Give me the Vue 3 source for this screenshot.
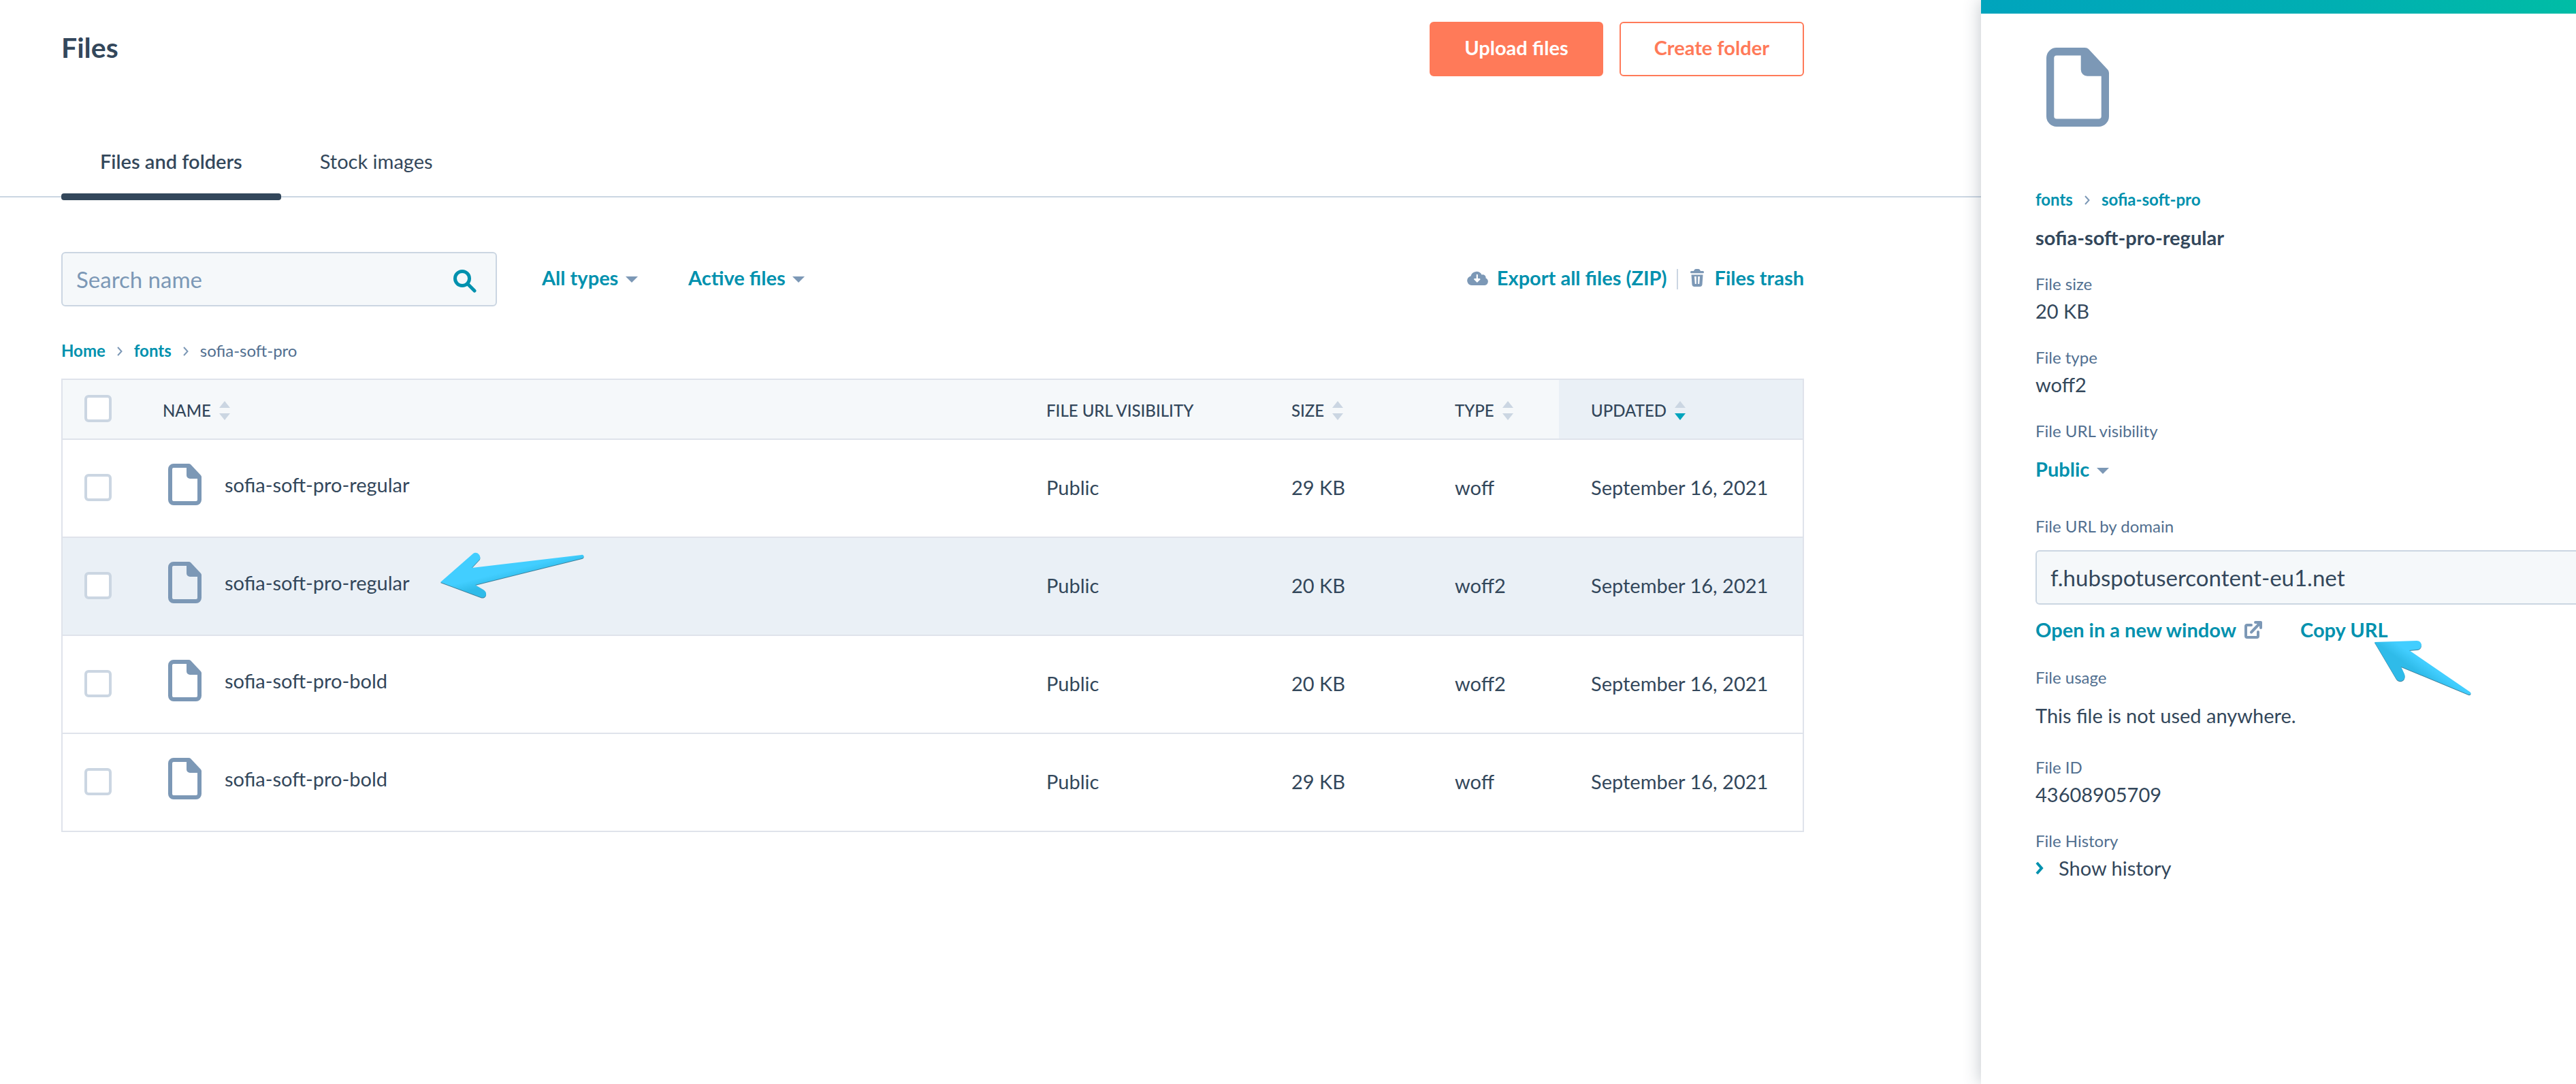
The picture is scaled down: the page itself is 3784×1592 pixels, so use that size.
<script setup>
import { ref } from 'vue'

const search = ref('')
const typeFilter = ref('All types')
const stateFilter = ref('Active files')
const visibility = ref('Public')
const domain = ref('f.hubspotusercontent-eu1.net')

const files = [
  { id: 1, name: 'sofia-soft-pro-regular', size: '29 KB', type: 'woff' },
  { id: 2, name: 'sofia-soft-pro-regular', size: '20 KB', type: 'woff2', active: true },
  { id: 3, name: 'sofia-soft-pro-bold', size: '20 KB', type: 'woff2' },
  { id: 4, name: 'sofia-soft-pro-bold', size: '29 KB', type: 'woff' },
]

const columns = [
  { key: 'name', label: 'NAME', sortable: true },
  { key: 'visibility', label: 'FILE URL VISIBILITY' },
  { key: 'size', label: 'SIZE', sortable: true },
  { key: 'type', label: 'TYPE', sortable: true },
  { key: 'updated', label: 'UPDATED', sortable: true, sorted: true },
]

const filePath =
  'M8 0H30Q32 0 33 1L48 17Q49 18 49 19.5V53A8 8 0 0 1 41 61H8A8 8 0 0 1 0 53V8A8 8 0 0 1 8 0ZM8 6A2 2 0 0 0 6 8V53A2 2 0 0 0 8 55H41A2 2 0 0 0 43 53V22H32A5 5 0 0 1 27 17V6Z'
</script>

<template>
  <div class="page">
    <main class="main">
      <header class="header">
        <h1>Files</h1>
        <div class="actions">
          <button class="btn btn-primary" type="button">Upload files</button>
          <button class="btn btn-outline" type="button">Create folder</button>
        </div>
      </header>

      <nav class="tabs">
        <a class="tab current" href="#files">Files and folders</a>
        <a class="tab" href="#stock">Stock images</a>
      </nav>

      <div class="content">
        <div class="toolbar">
          <div class="search">
            <input v-model="search" type="text" placeholder="Search name" aria-label="Search name" />
            <svg class="search-icon" viewBox="0 0 34 34" aria-hidden="true">
              <circle cx="13" cy="13" r="10.5" fill="none" stroke="currentColor" stroke-width="5" />
              <path d="M21 21L31 31" stroke="currentColor" stroke-width="5" stroke-linecap="round" />
            </svg>
          </div>
          <div class="filters">
            <label class="dropdown">
              <select v-model="typeFilter" aria-label="File type">
                <option>All types</option>
              </select>
              <svg class="caret" viewBox="0 0 18 9" aria-hidden="true"><path d="M0 0H18L9 9Z" /></svg>
            </label>
            <label class="dropdown">
              <select v-model="stateFilter" aria-label="File state">
                <option>Active files</option>
              </select>
              <svg class="caret" viewBox="0 0 18 9" aria-hidden="true"><path d="M0 0H18L9 9Z" /></svg>
            </label>
          </div>
          <div class="tools">
            <a class="link tool" href="#export">
              <svg class="cloud" viewBox="0 0 32 22" aria-hidden="true">
                <path fill-rule="evenodd" d="M7 22A7 7 0 0 1 1.5 11Q3 9 5.500 8.500A8.600 8.600 0 0 1 21.500 6.500A4.500 4.500 0 0 1 27.500 11.500A5.500 5.500 0 0 1 26 22ZM13.700 6.500V12H11Q9.500 12.500 10.500 13.800L14.800 18L19.200 13.800Q20 12.500 18.500 12H15.900V6.500Q14.800 5 13.700 6.500Z" />
              </svg>
              Export all files (ZIP)
            </a>
            <span class="divider"></span>
            <a class="link tool" href="#trash">
              <svg class="trash" viewBox="0 0 20 26" aria-hidden="true">
                <path fill-rule="evenodd" d="M1.500 3H5Q6 0 8 0H12Q14 0 15 3H18.500Q20 3.300 20 4.700Q20 6.300 18.500 6.300H1.500Q0 6.300 0 4.700Q0 3.300 1.500 3ZM1.500 8.500H18.500L17.500 23Q17 26 14 26H6Q3 26 2.500 23ZM6 11L6.800 22H8.800V11ZM11.200 11V22H13.200L14 11Z" />
              </svg>
              Files trash
            </a>
          </div>
        </div>

        <nav class="crumbs" aria-label="Breadcrumb">
          <a class="link" href="#home">Home</a>
          <svg class="chevron" viewBox="0 0 8 14" aria-hidden="true"><path d="M1 1L6.500 7L1 13" /></svg>
          <a class="link" href="#fonts">fonts</a>
          <svg class="chevron" viewBox="0 0 8 14" aria-hidden="true"><path d="M1 1L6.500 7L1 13" /></svg>
          <span>sofia-soft-pro</span>
        </nav>

        <table>
          <colgroup>
            <col class="col-check" />
            <col />
            <col class="col-visibility" />
            <col class="col-size" />
            <col class="col-type" />
            <col class="col-updated" />
          </colgroup>
          <thead>
            <tr>
              <th class="check"><input type="checkbox" aria-label="Select all files" /></th>
              <th v-for="c in columns" :key="c.key" scope="col" :class="{ sorted: c.sorted }">
                <span class="th-label">
                  {{ c.label }}
                  <svg v-if="c.sortable" class="sorter" viewBox="0 0 16 28" aria-hidden="true">
                    <path d="M0 10H16L8 0Z" />
                    <path class="down" d="M0 18H16L8 28Z" />
                  </svg>
                </span>
              </th>
            </tr>
          </thead>
          <tbody>
            <tr v-for="f in files" :key="f.id" :class="{ active: f.active }">
              <td class="check"><input type="checkbox" :aria-label="'Select ' + f.name + ' ' + f.type" /></td>
              <td class="name">
                <a class="file" href="#file">
                  <svg class="file-icon" viewBox="0 0 49 61" aria-hidden="true"><path fill-rule="evenodd" :d="filePath" /></svg>
                  {{ f.name }}
                </a>
                <svg v-if="f.active" class="pointer pointer-row" viewBox="0 0 212 70" aria-hidden="true">
                  <defs>
                    <linearGradient id="pointer-row-fill" x1="95" y1="22" x2="101" y2="46" gradientUnits="userSpaceOnUse">
                      <stop offset="0.3" stop-color="#42ceff" />
                      <stop offset="0.9" stop-color="#2fbbe9" />
                    </linearGradient>
                  </defs>
                  <path fill="url(#pointer-row-fill)" d="M1 45L49 3C54 -1 61 5 59 11L47 24L208 5C212 4 213 9 209 10L52 49L64 56C72 61 67 70 60 67Z" />
                </svg>
              </td>
              <td>Public</td>
              <td>{{ f.size }}</td>
              <td>{{ f.type }}</td>
              <td>September 16, 2021</td>
            </tr>
          </tbody>
        </table>
      </div>
    </main>

    <aside class="panel">
      <div class="panel-bar"></div>
      <div class="panel-body">
        <svg class="preview" viewBox="0 0 49 61" preserveAspectRatio="none" aria-hidden="true"><path fill-rule="evenodd" :d="filePath" /></svg>

        <nav class="crumbs panel-crumbs" aria-label="File location">
          <a class="link" href="#fonts">fonts</a>
          <svg class="chevron" viewBox="0 0 8 14" aria-hidden="true"><path d="M1 1L6.500 7L1 13" /></svg>
          <a class="link" href="#sofia">sofia-soft-pro</a>
        </nav>
        <h2>sofia-soft-pro-regular</h2>

        <section class="field">
          <h3>File size</h3>
          <p>20 KB</p>
        </section>
        <section class="field">
          <h3>File type</h3>
          <p>woff2</p>
        </section>
        <section class="field roomy">
          <label for="visibility">File URL visibility</label>
          <div class="dropdown">
            <select id="visibility" v-model="visibility">
              <option>Public</option>
            </select>
            <svg class="caret" viewBox="0 0 18 9" aria-hidden="true"><path d="M0 0H18L9 9Z" /></svg>
          </div>
        </section>
        <section class="field domain">
          <label for="domain">File URL by domain</label>
          <select id="domain" v-model="domain" class="domain-select">
            <option>f.hubspotusercontent-eu1.net</option>
          </select>
          <div class="url-links">
            <a class="link open" href="#open">
              Open in a new window
              <svg class="external" viewBox="0 0 26 26" aria-hidden="true">
                <path d="M10 6H4Q2 6 2 8V22Q2 24 4 24H18Q20 24 20 22V16" />
                <path class="head" d="M16 2H24V10" />
                <path d="M22 4L10 16.500" />
              </svg>
            </a>
            <a class="link copy" href="#copy">
              Copy URL
              <svg class="pointer pointer-copy" viewBox="0 0 146 64" aria-hidden="true">
                <defs>
                  <linearGradient id="pointer-copy-fill" x1="64" y1="23" x2="50" y2="43" gradientUnits="userSpaceOnUse">
                    <stop offset="0.1" stop-color="#42ceff" />
                    <stop offset="0.8" stop-color="#2fbbe9" />
                  </linearGradient>
                </defs>
                <path fill="url(#pointer-copy-fill)" d="M1 3L63 1C72 1 72 13 64 14L52 15L141 76C144 78 142 81 139 80L40 39L45 50C48 59 38 64 33 57Z" />
              </svg>
            </a>
          </div>
        </section>
        <section class="field usage roomy">
          <h3>File usage</h3>
          <p>This file is not used anywhere.</p>
        </section>
        <section class="field file-id">
          <h3>File ID</h3>
          <p>43608905709</p>
        </section>
        <section class="field">
          <h3>File History</h3>
          <button class="history" type="button">
            <svg viewBox="0 0 12 20" aria-hidden="true"><path d="M2 2L9 10L2 18" /></svg>
            Show history
          </button>
        </section>
      </div>
    </aside>
  </div>
</template>

<style>
body {
  background: #fff;
}
</style>

<style scoped>
.page {
  display: flex;
  min-height: 100vh;
  overflow: hidden;
  color: #33475b;
  font-family: Lato, "Liberation Sans", sans-serif;
  font-size: 29px;
  line-height: 36px;
}

.page *,
.page *::before,
.page *::after {
  box-sizing: border-box;
}

h1, h2, h3, p {
  margin: 0;
}

input, select, button {
  font: inherit;
  color: inherit;
}

a {
  color: inherit;
  text-decoration: none;
}

.link {
  color: #0091ae;
  font-weight: 700;
}

.main {
  flex: 1;
  min-width: 0;
}

.header {
  display: flex;
  align-items: center;
  justify-content: space-between;
  padding: 32px 260px 0 90px;
}

h1 {
  padding-bottom: 4px;
  font-size: 41px;
  line-height: 48px;
  font-weight: 700;
}

.actions {
  display: flex;
  gap: 24px;
}

.btn {
  height: 80px;
  padding: 0 49px 4px;
  border: 2px solid #ff7a59;
  border-radius: 6px;
  font-size: 29px;
  font-weight: 700;
}

.btn-primary {
  background: #ff7a59;
  color: #fff;
}

.btn-outline {
  background: #fff;
  color: #ff7a59;
}

.tabs {
  display: flex;
  margin-top: 72px;
  padding-left: 90px;
  border-bottom: 2px solid #cbd6e2;
}

.tab {
  position: relative;
  height: 104px;
  padding: 0 57px;
  line-height: 106px;
}

.tab.current {
  font-weight: 600;
}

.tab.current::after {
  content: "";
  position: absolute;
  left: 0;
  right: 0;
  bottom: -6px;
  height: 10px;
  border-radius: 4px;
  background: #33475b;
}

.content {
  padding: 80px 260px 0 90px;
}

.toolbar {
  display: flex;
  align-items: center;
}

.search {
  position: relative;
  width: 640px;
}

.search input {
  display: block;
  width: 100%;
  height: 80px;
  padding: 0 80px 0 20px;
  border: 2px solid #cbd6e2;
  border-radius: 6px;
  background: #f5f8fa;
  font-size: 33px;
}

.search input::placeholder {
  color: #7c98b6;
  opacity: 1;
}

.search-icon {
  position: absolute;
  top: 26px;
  right: 30px;
  width: 34px;
  height: 34px;
  color: #0091ae;
}

.filters {
  display: flex;
  gap: 74px;
  margin-left: 66px;
  padding-bottom: 4px;
}

.dropdown {
  display: inline-flex;
  align-items: center;
  gap: 10px;
  color: #0091ae;
}

.dropdown select {
  appearance: none;
  padding: 0;
  border: 0;
  background: none;
  font-weight: 700;
  line-height: 36px;
}

.caret {
  width: 18px;
  height: 9px;
  margin-top: 4px;
  fill: #7c98b6;
}

.tools {
  display: flex;
  align-items: center;
  gap: 14px;
  margin-left: auto;
  padding-bottom: 4px;
}

.tool {
  display: flex;
  align-items: center;
  gap: 12px;
}

.tool svg {
  fill: #7c98b6;
}

.cloud {
  width: 32px;
  height: 22px;
}

.trash {
  width: 20px;
  height: 26px;
  margin: 0 4px;
}

.divider {
  width: 2px;
  height: 30px;
  margin-top: 4px;
  background: #cbd6e2;
}

.crumbs {
  display: flex;
  align-items: center;
  gap: 17px;
  margin: 49px 0 25px;
  color: #516f90;
  font-size: 24px;
  line-height: 32px;
}

.chevron {
  width: 8px;
  height: 14px;
  margin-top: 2px;
  fill: none;
  stroke: #7c98b6;
  stroke-width: 2;
}

table {
  width: 100%;
  table-layout: fixed;
  border: 2px solid #dfe3eb;
  border-bottom: 0;
  border-collapse: separate;
  border-spacing: 0;
}

.col-check { width: 100px; }
.col-visibility { width: 360px; }
.col-size { width: 240px; }
.col-type { width: 200px; }
.col-updated { width: 358px; }

th, td {
  padding: 0 0 2px 47px;
  border-bottom: 2px solid #dfe3eb;
  text-align: left;
  vertical-align: middle;
}

th {
  height: 88px;
  background: #f5f8fa;
  font-size: 24px;
  line-height: 32px;
  font-weight: 500;
}

th.sorted {
  background: #eaf0f6;
}

td {
  height: 144px;
}

.th-label {
  display: flex;
  align-items: center;
  gap: 12px;
  padding-top: 6px;
}

.sorter {
  width: 16px;
  height: 28px;
  fill: #cbd6e2;
}

.sorted .down {
  fill: #00a4bd;
}

.check {
  padding-left: 32px;
}

.check input {
  display: block;
  appearance: none;
  width: 40px;
  height: 40px;
  margin: 0;
  border: 4px solid #cbd6e2;
  border-radius: 6px;
  background: #fff;
}

.active td {
  background: #eaf0f6;
}

td.name {
  position: relative;
  padding-bottom: 4px;
}

.file {
  display: inline-flex;
  align-items: center;
  gap: 34px;
  padding-left: 8px;
}

.file-icon {
  width: 49px;
  height: 61px;
  fill: #7c98b6;
}

.pointer {
  position: absolute;
  overflow: visible;
  filter: drop-shadow(0 1px 0 #3f7f99);
}

.pointer-row {
  left: 454px;
  top: 20px;
  width: 212px;
  height: 70px;
}

.panel {
  position: relative;
  flex: none;
  width: 874px;
  background: #fff;
  box-shadow: 0 0 24px rgba(45, 62, 80, 0.3);
}

.panel-bar {
  height: 20px;
  background: linear-gradient(50deg, #00a4bd, #00afb2 60%, #00bda5);
}

.panel-body {
  padding: 50px 0 0 80px;
}

.preview {
  display: block;
  width: 92px;
  height: 116px;
  margin-left: 16px;
  fill: #7c98b6;
}

.panel-crumbs {
  margin: 91px 0 22px;
}

h2 {
  font-size: 29px;
  line-height: 36px;
  font-weight: 700;
}

.field {
  margin-top: 34px;
}

.field h3,
.field label {
  display: block;
  margin-bottom: 6px;
  color: #516f90;
  font-size: 24px;
  line-height: 32px;
  font-weight: 400;
}

.roomy h3,
.roomy label {
  margin-bottom: 22px;
}

.field .dropdown {
  display: flex;
}

.domain {
  margin-top: 50px;
}

.domain label {
  margin-bottom: 19px;
}

.domain-select {
  display: block;
  appearance: none;
  width: calc(100% + 20px);
  height: 80px;
  padding: 0 20px;
  border: 2px solid #cbd6e2;
  border-radius: 6px;
  background: #f5f8fa;
  font-size: 33px;
}

.url-links {
  display: flex;
  gap: 56px;
  margin-top: 19px;
}

.open {
  display: flex;
  align-items: center;
  gap: 12px;
}

.external {
  width: 26px;
  height: 26px;
  fill: none;
  stroke: #7c98b6;
  stroke-width: 4;
  stroke-linejoin: round;
  stroke-linecap: round;
}

.external .head {
  fill: #7c98b6;
}

.copy {
  position: relative;
}

.pointer-copy {
  left: 108px;
  top: 33px;
  width: 146px;
  height: 64px;
}

.usage {
  margin-top: 36px;
}

.file-id {
  margin-top: 42px;
}

.history {
  display: flex;
  align-items: center;
  gap: 22px;
  padding: 0;
  border: 0;
  background: none;
}

.history svg {
  width: 12px;
  height: 20px;
  fill: none;
  stroke: #0091ae;
  stroke-width: 4;
}
</style>
